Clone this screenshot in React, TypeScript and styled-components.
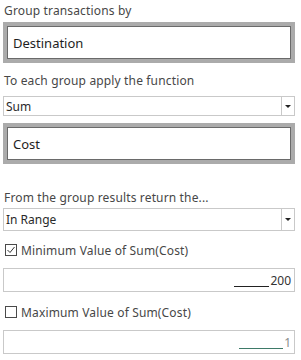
import styled, { createGlobalStyle } from "styled-components";

const GlobalStyle = createGlobalStyle`
  body {
    margin: 0;
    background: #ffffff;
    font-family: "Noto Sans", "Open Sans", sans-serif;
    font-size: 12px;
    color: #474747;
  }
`;

const Panel = styled.div`
  width: 292px;
  padding: 0 6px 0 3px;
  display: flex;
  flex-direction: column;
`;

const Label = styled.div<{ $top: number }>`
  margin-top: ${(p) => p.$top}px;
  padding-left: 1px;
  height: 16px;
  line-height: 16px;
  white-space: nowrap;
  letter-spacing: 0.15px;
`;

const FieldBox = styled.div<{ $top: number }>`
  margin-top: ${(p) => p.$top}px;
  height: 41px;
  box-sizing: border-box;
  border: 4px solid #ababab;
  display: flex;
`;

const FieldInner = styled.div`
  flex: 1;
  border: 1px solid #6a6a6a;
  background: #ffffff;
  display: flex;
  align-items: center;
  padding-left: 5px;
  font-size: 13px;
  color: #1e1e1e;
`;

const Select = styled.div<{ $top: number; $height: number }>`
  margin-top: ${(p) => p.$top}px;
  height: ${(p) => p.$height}px;
  box-sizing: border-box;
  border: 1px solid #c9c9c9;
  display: flex;
`;

const SelectValue = styled.div`
  flex: 1;
  display: flex;
  align-items: center;
  padding-left: 2px;
  color: #2a2a2a;
`;

const SelectButton = styled.div`
  width: 12px;
  border-left: 1px solid #c9c9c9;
  display: flex;
  align-items: center;
  justify-content: center;
`;

const Arrow = styled.div`
  width: 0;
  height: 0;
  border-left: 3px solid transparent;
  border-right: 3px solid transparent;
  border-top: 3px solid #222;
`;

const CheckRow = styled.label<{ $top: number }>`
  margin-top: ${(p) => p.$top}px;
  display: flex;
  align-items: center;
  gap: 4px;
  height: 16px;
  padding-left: 2px;
  letter-spacing: 0.15px;
`;

const Box = styled.span`
  width: 12px;
  height: 12px;
  box-sizing: border-box;
  border: 1px solid #4a4a4a;
  background: #fff;
  display: flex;
  align-items: center;
  justify-content: center;
`;

const ValueInput = styled.div<{ $top: number }>`
  margin-top: ${(p) => p.$top}px;
  height: 24px;
  box-sizing: border-box;
  border: 1px solid #c9c9c9;
  display: flex;
  align-items: center;
  justify-content: flex-end;
  padding-right: 3px;
  white-space: pre;
`;

const Blank = styled.span<{ $color: string; $width: number }>`
  display: inline-block;
  width: ${(p) => p.$width}px;
  height: 12px;
  border-bottom: 1px solid ${(p) => p.$color};
  margin-right: 1px;
`;

const Num = styled.span<{ $color: string }>`
  color: ${(p) => p.$color};
`;

function Check({ checked }: { checked: boolean }) {
  return (
    <Box>
      {checked && (
        <svg width="10" height="10" viewBox="0 0 10 10">
          <path d="M1.5 5 L4 7.5 L8.5 2" fill="none" stroke="#333" strokeWidth="1" />
        </svg>
      )}
    </Box>
  );
}

export default function App() {
  return (
    <>
      <GlobalStyle />
      <Panel>
        <Label $top={3}>Group transactions by</Label>
        <FieldBox $top={3}>
          <FieldInner>Destination</FieldInner>
        </FieldBox>
        <Label $top={10}>To each group apply the function</Label>
        <Select $top={7} $height={20}>
          <SelectValue>Sum</SelectValue>
          <SelectButton>
            <Arrow />
          </SelectButton>
        </Select>
        <FieldBox $top={7}>
          <FieldInner>Cost</FieldInner>
        </FieldBox>
        <Label $top={26}>From the group results return the...</Label>
        <Select $top={2} $height={23}>
          <SelectValue>In Range</SelectValue>
          <SelectButton>
            <Arrow />
          </SelectButton>
        </Select>
        <CheckRow $top={11}>
          <Check checked />
          Minimum Value of Sum(Cost)
        </CheckRow>
        <ValueInput $top={10}>
          <Blank $color="#222" $width={35} />
          <Num $color="#333">200</Num>
        </ValueInput>
        <CheckRow $top={12}>
          <Check checked={false} />
          Maximum Value of Sum(Cost)
        </CheckRow>
        <ValueInput $top={10}>
          <Blank $color="#3e7a68" $width={44} />
          <Num $color="#8a8a8a">1</Num>
        </ValueInput>
      </Panel>
    </>
  );
}
